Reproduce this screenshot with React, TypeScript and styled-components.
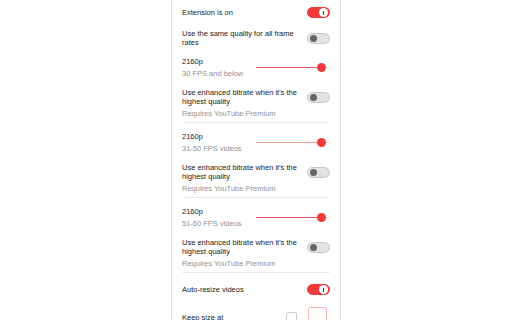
import React from "react";
import styled, { createGlobalStyle } from "styled-components";

const GlobalStyle = createGlobalStyle`
  html, body {
    margin: 0;
    padding: 0;
    background: #ffffff;
    overflow: hidden;
  }
  body {
    font-family: "Liberation Sans", Arial, sans-serif;
  }
`;

const Page = styled.div`
  width: 100%;
  height: 100vh;
  display: flex;
  justify-content: center;
  align-items: flex-start;
`;

const Panel = styled.div`
  width: 148px;
  min-height: 100vh;
  padding: 7px 10px 0 10px;
  border-left: 1px solid #dedede;
  border-right: 1px solid #dedede;
  display: flex;
  flex-direction: column;
  font-size: 7.5px;
  line-height: 9px;
  color: #222222;
`;

const Row = styled.div<{ $mt?: number }>`
  display: flex;
  align-items: center;
  justify-content: space-between;
  margin-top: ${(p) => p.$mt ?? 0}px;
`;

const Label = styled.div`
  max-width: 118px;
  color: #222222;
`;

const TextBlock = styled.div`
  display: flex;
  flex-direction: column;
  gap: 3px;
`;

const SubText = styled.div<{ $mt?: number }>`
  color: #939393;
  margin-top: ${(p) => p.$mt ?? 0}px;
`;

const Divider = styled.div`
  height: 1px;
  background: #ebebeb;
  margin-top: 4px;
`;

const ToggleTrack = styled.div<{ $on: boolean }>`
  position: relative;
  flex-shrink: 0;
  width: 23px;
  height: 11px;
  box-sizing: border-box;
  border-radius: 6px;
  background: ${(p) => (p.$on ? "#f23a3a" : "#e3e3e3")};
  border: 1px solid ${(p) => (p.$on ? "#f23a3a" : "#c6c6c6")};
`;

const ToggleKnob = styled.div<{ $on: boolean }>`
  position: absolute;
  top: ${(p) => (p.$on ? 0 : 1)}px;
  left: ${(p) => (p.$on ? "auto" : "2px")};
  right: ${(p) => (p.$on ? "1px" : "auto")};
  width: ${(p) => (p.$on ? 9 : 7)}px;
  height: ${(p) => (p.$on ? 9 : 7)}px;
  border-radius: 50%;
  background: ${(p) => (p.$on ? "#ffffff" : "#666666")};
  display: flex;
  align-items: center;
  justify-content: center;

  &::after {
    content: "";
    display: ${(p) => (p.$on ? "block" : "none")};
    width: 1px;
    height: 4px;
    background: #444444;
  }
`;

const SliderTrack = styled.div`
  position: relative;
  flex-shrink: 0;
  width: 74px;
  height: 1px;
  background: #e2e2e2;
`;

const SliderFill = styled.div<{ $pct: number; $soft?: boolean }>`
  position: absolute;
  left: 0;
  top: 0;
  height: 1px;
  width: ${(p) => p.$pct}%;
  background: ${(p) => (p.$soft ? "#f79a9a" : "#f45a5a")};
`;

const SliderThumb = styled.div<{ $pct: number }>`
  position: absolute;
  top: -4px;
  left: calc(${(p) => p.$pct}% - 4px);
  width: 9px;
  height: 9px;
  border-radius: 50%;
  background: #f23a3a;
`;

const RightGroup = styled.div`
  display: flex;
  align-items: center;
  gap: 11px;
  margin-right: 3px;
`;

const CheckBox = styled.div`
  width: 11px;
  height: 10px;
  box-sizing: border-box;
  border: 1px solid #cccccc;
  border-radius: 2px;
  background: #ffffff;
`;

const SizeInput = styled.div`
  width: 19px;
  height: 20px;
  box-sizing: border-box;
  border: 1px solid #f7b4b4;
  border-radius: 2px;
  background: #ffffff;
`;

function Toggle({ on }: { on: boolean }) {
  return (
    <ToggleTrack $on={on}>
      <ToggleKnob $on={on} />
    </ToggleTrack>
  );
}

function Slider({ pct, soft }: { pct: number; soft?: boolean }) {
  return (
    <SliderTrack>
      <SliderFill $pct={pct} $soft={soft} />
      <SliderThumb $pct={pct} />
    </SliderTrack>
  );
}

const sections = [
  { res: "2160p", fps: "30 FPS and below", soft: false },
  { res: "2160p", fps: "31-50 FPS videos", soft: true },
  { res: "2160p", fps: "51-60 FPS videos", soft: false },
];

export default function App(): React.JSX.Element {
  return (
    <>
      <GlobalStyle />
      <Page>
        <Panel>
          <Row>
            <Label>Extension is on</Label>
            <Toggle on />
          </Row>
          <Row $mt={11}>
            <Label>Use the same quality for all frame rates</Label>
            <Toggle on={false} />
          </Row>

          {sections.map((s, i) => (
            <React.Fragment key={i}>
              <Row $mt={i === 0 ? 10 : 9}>
                <TextBlock>
                  <Label>{s.res}</Label>
                  <SubText>{s.fps}</SubText>
                </TextBlock>
                <Slider pct={88} soft={s.soft} />
              </Row>
              <Row $mt={10}>
                <Label>Use enhanced bitrate when it's the highest quality</Label>
                <Toggle on={false} />
              </Row>
              <SubText $mt={3}>Requires YouTube Premium</SubText>
              <Divider />
            </React.Fragment>
          ))}

          <Row $mt={11}>
            <Label>Auto-resize videos</Label>
            <Toggle on />
          </Row>
          <Row $mt={12}>
            <Label>Keep size at</Label>
            <RightGroup>
              <CheckBox />
              <SizeInput />
            </RightGroup>
          </Row>
        </Panel>
      </Page>
    </>
  );
}
